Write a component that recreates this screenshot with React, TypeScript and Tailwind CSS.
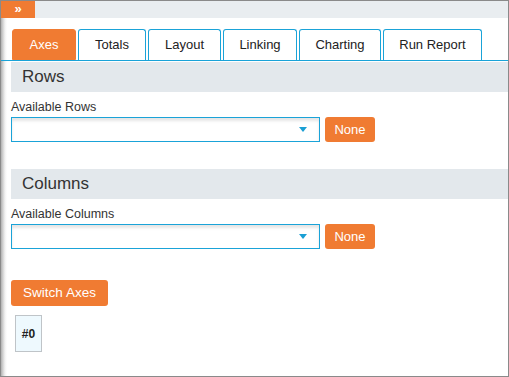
import React from "react";

const font = { fontFamily: '"Liberation Sans", Arial, sans-serif' };

function Tab({ label, w, active }: { label: string; w: string; active?: boolean }) {
  return (
    <div
      className={`${w} h-[31px] flex items-center justify-center rounded-t-[3px] text-[13px] ${
        active
          ? "bg-[#f07b32] text-white border border-[#f07b32]"
          : "bg-white text-[#222] border border-b-0 border-[#1aa3d8]"
      }`}
    >
      {label}
    </div>
  );
}

function SelectRow() {
  return (
    <div className="flex items-start gap-[5px] mt-[3px]">
      <div className="relative w-[309px] h-[25px] border border-[#1aa3d8] bg-white shadow-[inset_0_3px_3px_rgba(0,0,0,0.10)]">
        <svg className="absolute right-[12px] top-[9px]" width="8" height="6" viewBox="0 0 8 6">
          <path d="M0 0 L8 0 L4 5 Z" fill="#1a9fd4" />
        </svg>
      </div>
      <button className="w-[50px] h-[25px] rounded-[3px] bg-[#f07b32] text-white text-[13px] flex items-center justify-center">
        None
      </button>
    </div>
  );
}

export default function App() {
  return (
    <div
      className="w-[509px] h-[377px] border border-[#8a8a8a] bg-white overflow-hidden flex flex-col"
      style={font}
    >
      <div className="h-[17px] bg-[#e9edf0] flex shrink-0">
        <div className="w-[34px] h-[17px] bg-[#f07b32] flex items-center justify-center text-white font-bold text-[13px] leading-none pb-[2px]">
          »
        </div>
      </div>
      <div className="flex-1 bg-[linear-gradient(to_right,#b0b0b0_0px,#d4d4d4_2px,#f2f2f2_4px,#ffffff_6px)]">
        <div className="mt-[11px] pl-[11px] flex gap-[2px] border-b border-[#1aa3d8]">
          <Tab label="Axes" w="w-[64px]" active />
          <Tab label="Totals" w="w-[68px]" />
          <Tab label="Layout" w="w-[73px]" />
          <Tab label="Linking" w="w-[74px]" />
          <Tab label="Charting" w="w-[82px]" />
          <Tab label="Run Report" w="w-[99px]" />
        </div>
        <div className="pl-[10px]">
          <div className="mt-[1px] h-[30px] bg-[#e3e8ec] flex items-center pl-[11px] text-[17px] text-[#333]">
            Rows
          </div>
          <div className="mt-[8px] text-[12.5px] text-[#333] leading-[14px]">Available Rows</div>
          <SelectRow />
          <div className="mt-[27px] h-[30px] bg-[#e3e8ec] flex items-center pl-[11px] text-[17px] text-[#333]">
            Columns
          </div>
          <div className="mt-[8px] text-[12.5px] text-[#333] leading-[14px]">Available Columns</div>
          <SelectRow />
          <button className="mt-[31px] w-[97px] h-[26px] rounded-[3px] bg-[#f07b32] text-white text-[13.5px] flex items-center justify-center">
            Switch Axes
          </button>
          <div className="mt-[9px] ml-[4px] w-[27px] h-[37px] border border-[#bfc4c8] bg-[#eef9fe] flex items-center justify-center text-[12px] font-bold text-[#222]">
            #0
          </div>
        </div>
      </div>
    </div>
  );
}
